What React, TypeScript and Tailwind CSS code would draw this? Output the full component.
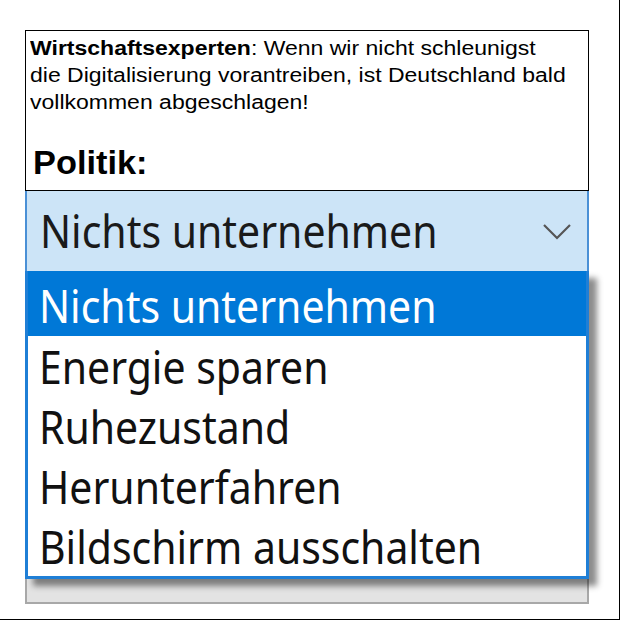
import React from "react";

const items = ["Energie sparen", "Ruhezustand", "Herunterfahren", "Bildschirm ausschalten"];

function Label({ children, className = "" }: { children: React.ReactNode; className?: string }) {
  return (
    <span className={"inline-block origin-left scale-x-[0.91] whitespace-nowrap " + className}>{children}</span>
  );
}

export default function App() {
  return (
    <div className="w-[621px] h-[621px] bg-white">
      <div className="w-[620px] h-[620px] border-r border-b border-black pl-[25px] pt-[30px]">
        <div className="w-[564px]">
          <div
            className="h-[161px] border border-black pl-[4px] pt-[4px] overflow-hidden"
            style={{ fontFamily: '"Liberation Sans", Arial, sans-serif' }}
          >
            <div className="w-[480px] origin-top-left scale-x-[1.15] text-[20px] leading-[27px] text-black">
              <p>
                <b>Wirtschaftsexperten</b>: Wenn wir nicht schleunigst
                <br />
                die Digitalisierung vorantreiben, ist Deutschland bald
                <br />
                vollkommen abgeschlagen!
              </p>
            </div>
            <p className="mt-[29px] pl-[3px] text-[34px] leading-[34px] font-bold text-black">
              <span className="inline-block origin-left scale-x-[1.01]">Politik:</span>
            </p>
          </div>
          <div style={{ fontFamily: '"Noto Sans", "Open Sans", sans-serif' }}>
            <div className="h-[80px] bg-[#cce4f7] border-x-2 border-[#4a90d6] flex items-center justify-between pl-[13px] pr-[16px]">
              <Label className="text-[45px] leading-none text-[#1a1a1a] pb-[2px]">Nichts unternehmen</Label>
              <svg width="28" height="16" viewBox="0 0 28 16" className="mt-[2px]">
                <polyline points="1,1 14,14 27,1" fill="none" stroke="#555" strokeWidth="2.2" />
              </svg>
            </div>
            <div className="relative z-10 border-[3px] border-t-0 border-[#1f7fd6] bg-white shadow-[8px_7px_6px_rgba(0,0,0,0.45)]">
              <div className="h-[65px] bg-[#0078d7] flex items-center pl-[11px] text-white text-[45px] leading-none">
                <Label className="pt-[4px]">Nichts unternehmen</Label>
              </div>
              {items.map((t) => (
                <div key={t} className="h-[60px] flex items-center pl-[11px] text-[45px] leading-none text-[#111]">
                  <Label>{t}</Label>
                </div>
              ))}
            </div>
            <div className="h-[25px] bg-[#e3e3e3] border-2 border-t-0 border-[#a8a8a8]"></div>
          </div>
        </div>
      </div>
    </div>
  );
}
